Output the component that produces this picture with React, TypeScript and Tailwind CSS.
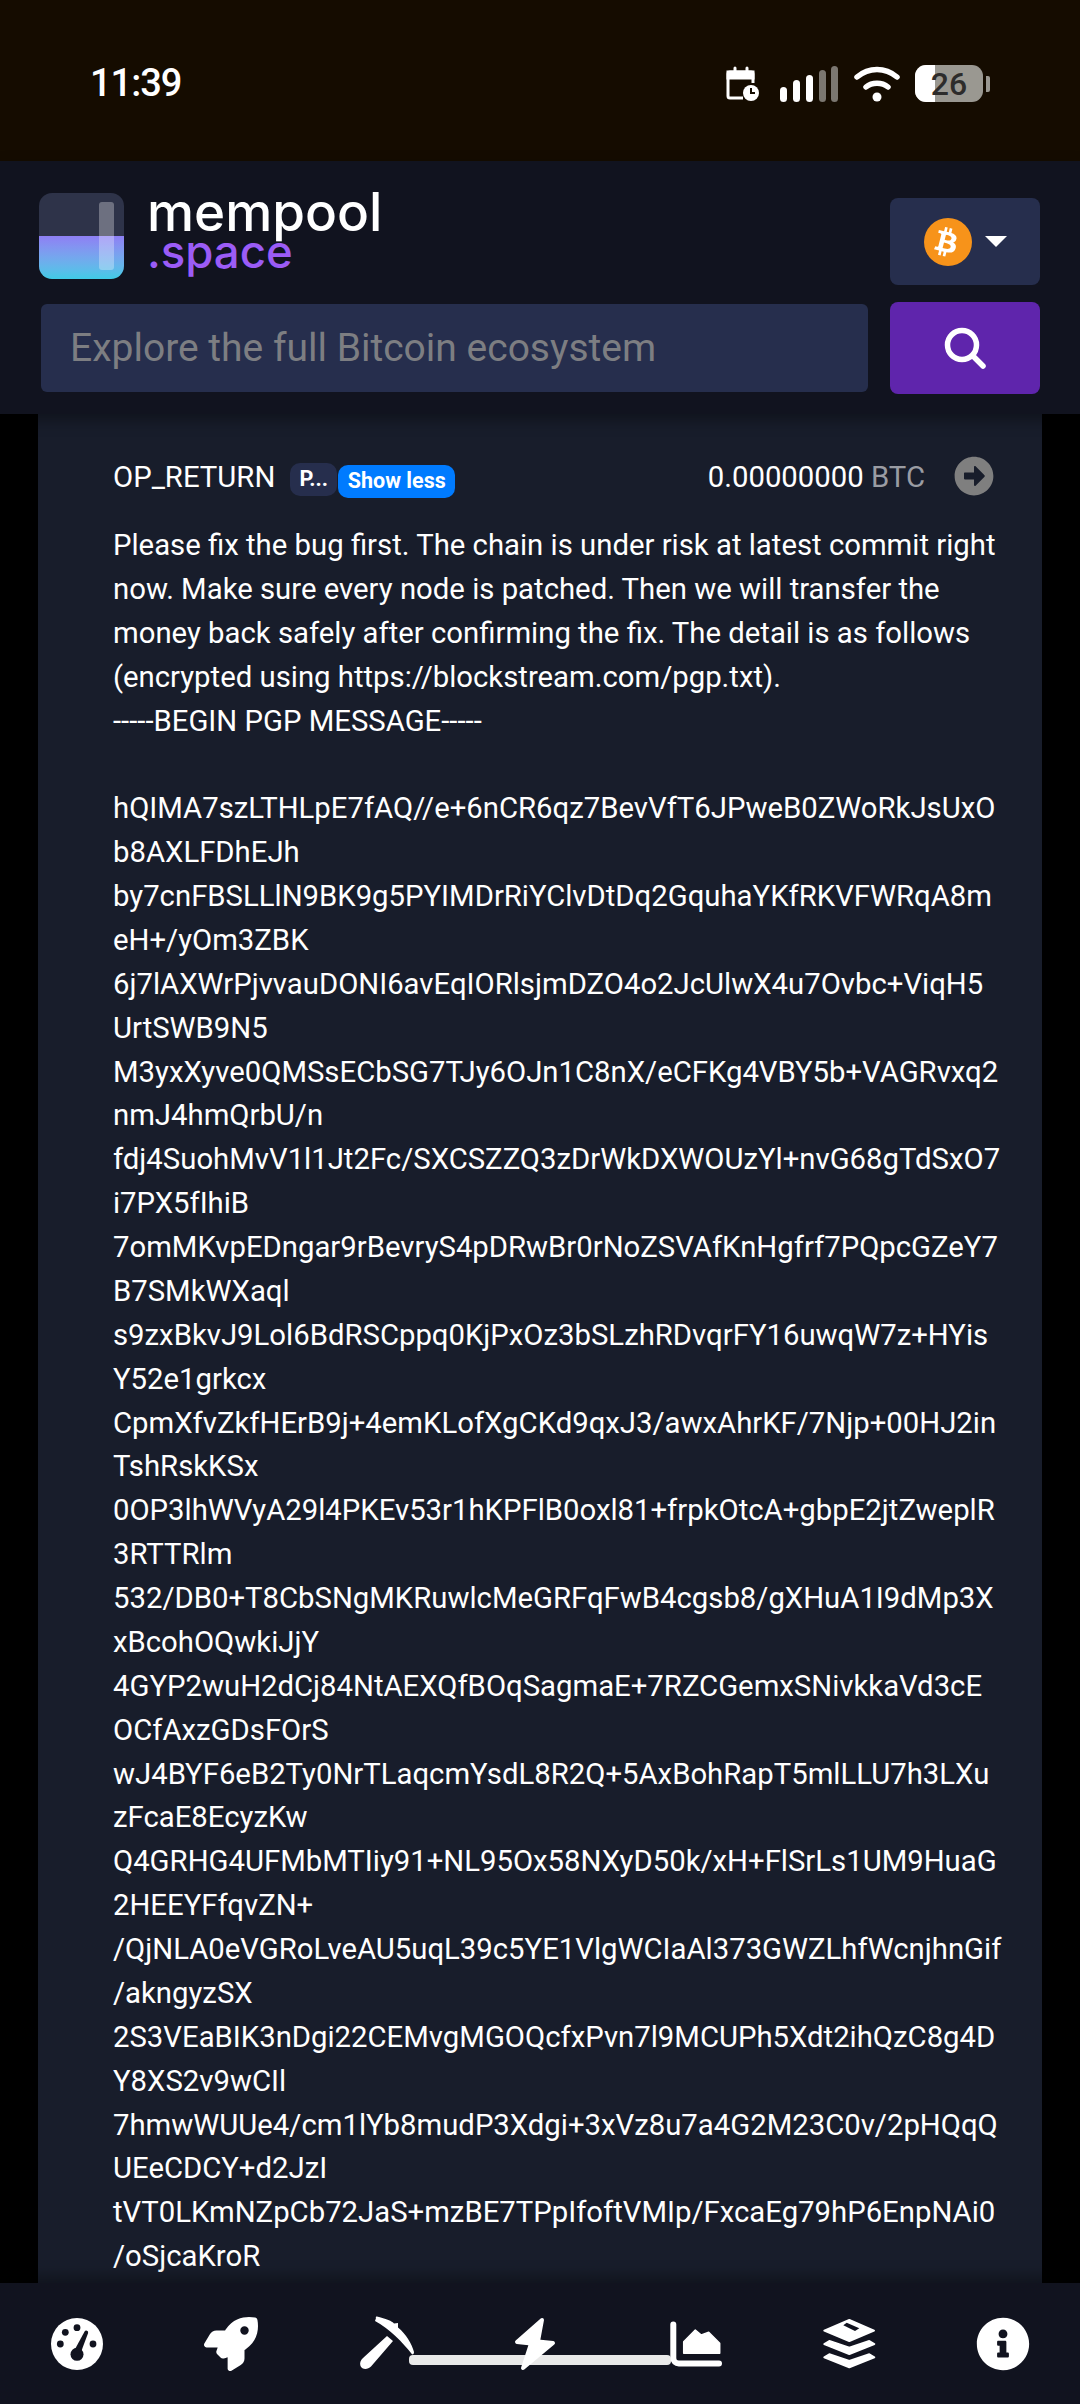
import React from 'react';
import { FaInfoCircle, FaArrowAltCircleRight } from 'react-icons/fa';
import { FaRocket } from 'react-icons/fa6';

const body = [
  'Please fix the bug first. The chain is under risk at latest commit right',
  'now. Make sure every node is patched. Then we will transfer the',
  'money back safely after confirming the fix. The detail is as follows',
  '(encrypted using https://blockstream.com/pgp.txt).',
  '-----BEGIN PGP MESSAGE-----',
  '\u00a0',
  'hQIMA7szLTHLpE7fAQ//e+6nCR6qz7BevVfT6JPweB0ZWoRkJsUxO',
  'b8AXLFDhEJh',
  'by7cnFBSLLlN9BK9g5PYIMDrRiYClvDtDq2GquhaYKfRKVFWRqA8m',
  'eH+/yOm3ZBK',
  '6j7lAXWrPjvvauDONI6avEqIORlsjmDZO4o2JcUlwX4u7Ovbc+ViqH5',
  'UrtSWB9N5',
  'M3yxXyve0QMSsECbSG7TJy6OJn1C8nX/eCFKg4VBY5b+VAGRvxq2',
  'nmJ4hmQrbU/n',
  'fdj4SuohMvV1l1Jt2Fc/SXCSZZQ3zDrWkDXWOUzYl+nvG68gTdSxO7',
  'i7PX5fIhiB',
  '7omMKvpEDngar9rBevryS4pDRwBr0rNoZSVAfKnHgfrf7PQpcGZeY7',
  'B7SMkWXaql',
  's9zxBkvJ9Lol6BdRSCppq0KjPxOz3bSLzhRDvqrFY16uwqW7z+HYis',
  'Y52e1grkcx',
  'CpmXfvZkfHErB9j+4emKLofXgCKd9qxJ3/awxAhrKF/7Njp+00HJ2in',
  'TshRskKSx',
  '0OP3lhWVyA29l4PKEv53r1hKPFlB0oxl81+frpkOtcA+gbpE2jtZweplR',
  '3RTTRlm',
  '532/DB0+T8CbSNgMKRuwlcMeGRFqFwB4cgsb8/gXHuA1I9dMp3X',
  'xBcohOQwkiJjY',
  '4GYP2wuH2dCj84NtAEXQfBOqSagmaE+7RZCGemxSNivkkaVd3cE',
  'OCfAxzGDsFOrS',
  'wJ4BYF6eB2Ty0NrTLaqcmYsdL8R2Q+5AxBohRapT5mlLLU7h3LXu',
  'zFcaE8EcyzKw',
  'Q4GRHG4UFMbMTIiy91+NL95Ox58NXyD50k/xH+FlSrLs1UM9HuaG',
  '2HEEYFfqvZN+',
  '/QjNLA0eVGRoLveAU5uqL39c5YE1VlgWCIaAl373GWZLhfWcnjhnGif',
  '/akngyzSX',
  '2S3VEaBIK3nDgi22CEMvgMGOQcfxPvn7l9MCUPh5Xdt2ihQzC8g4D',
  'Y8XS2v9wCIl',
  '7hmwWUUe4/cm1lYb8mudP3Xdgi+3xVz8u7a4G2M23C0v/2pHQqQ',
  'UEeCDCY+d2JzI',
  'tVT0LKmNZpCb72JaS+mzBE7TPpIfoftVMIp/FxcaEg79hP6EnpNAi0',
  '/oSjcaKroR',
];

const navBg = '#11131f';

function Logo() {
  return (
    <div className="relative w-[85px] h-[86px] rounded-[13px] overflow-hidden flex flex-col shrink-0">
      <div className="h-[43px] bg-[#2e3349]" />
      <div className="flex-1 bg-gradient-to-b from-[#8e7ff4] to-[#3ecbe6]" />
      <div className="absolute left-[60px] top-[9px] w-[15px] h-[68px] rounded-[3px] bg-white/30" />
    </div>
  );
}

function StatusIcons() {
  return (
    <div className="flex items-center">
      <svg width="34" height="36" viewBox="0 0 34 36" fill="none" stroke="#fff" strokeWidth="3">
        <path d="M27 17V8a2 2 0 0 0-2-2H4A2 2 0 0 0 2 8v22a2 2 0 0 0 2 2h13" />
        <path d="M9 2v6M21 2v6" strokeLinecap="round" />
        <path d="M2 6h25v6H2z" fill="#fff" />
        <circle cx="25" cy="27" r="8" fill="#fff" stroke="none" />
        <path d="M25 22v5h4" stroke="#150c00" strokeWidth="2" />
      </svg>
      <svg className="ml-[19px]" width="60" height="36" viewBox="0 0 60 36">
        <rect x="1" y="21" width="7" height="15" rx="3.5" fill="#fff" />
        <rect x="14" y="14" width="7" height="22" rx="3.5" fill="#fff" />
        <rect x="27" y="9" width="7" height="27" rx="3.5" fill="#fff" />
        <rect x="40" y="4" width="7" height="32" rx="3.5" fill="#7b7770" />
        <rect x="52" y="0" width="7" height="36" rx="3.5" fill="#7b7770" />
      </svg>
      <svg className="ml-[15px]" width="46" height="36" viewBox="0 0 46 36" fill="none" stroke="#fff" strokeWidth="5.5" strokeLinecap="round">
        <path d="M3 11C15 1 31 1 43 11" />
        <path d="M12 21C18 16 28 16 34 21" />
        <circle cx="23" cy="31" r="4.5" fill="#fff" stroke="none" />
      </svg>
      <div className="ml-[15px] relative w-[68px] h-[37px] rounded-[11px] overflow-hidden bg-[#9a9891] flex items-center justify-center">
        <div className="absolute left-0 top-0 bottom-0 w-[20px] bg-white" />
        <span className="relative font-['Roboto',sans-serif] font-medium text-[32px] leading-none text-[#2d2c2b]">26</span>
      </div>
      <div className="ml-[3px] w-[4px] h-[16px] rounded-r-[2px] bg-[#9a9891]" />
    </div>
  );
}

function GaugeIcon() {
  return (
    <svg className="relative" width="60" height="60" viewBox="0 0 60 60">
      <circle cx="30" cy="30" r="26" fill="#fff" />
      <g fill={navBg}>
        <circle cx="30" cy="13.7" r="3.4" />
        <circle cx="18.3" cy="18.3" r="3.4" />
        <circle cx="13.3" cy="30" r="3.4" />
        <circle cx="46" cy="30" r="3.4" />
        <circle cx="30" cy="40.3" r="6.5" />
        <path d="M27 37 37.6 17.6a1.9 1.9 0 0 1 3.5 1.4L33.5 39.5z" />
      </g>
    </svg>
  );
}

function PickIcon() {
  return (
    <svg className="relative" width="60" height="60" viewBox="0 0 60 60" fill="#fff">
      <path d="M20 4C19 2.500 21 2 23 3C30 5 36 7 38 9.500L42 9L42 13.500C50 20 56 30 58 38C58 41 56 41 55 39C47 29 34 15 19 7Z" />
      <path d="M31 22L37 27L15 52.500C11.500 56 6 55.500 4.500 52C3.500 49 4.500 46 7 44Z" />
    </svg>
  );
}

function BoltIcon() {
  return (
    <svg className="relative -translate-x-[3px]" width="60" height="60" viewBox="0 0 60 60" fill="#fff" stroke="#fff" strokeWidth="4" strokeLinejoin="round">
      <polygon points="35,6 10,28 24,29.500 16,54 46,29 31,27.500" />
    </svg>
  );
}

function ChartIcon() {
  return (
    <svg className="relative" width="64" height="60" viewBox="0 0 64 60" fill="none">
      <path d="M11.300 10.500V44a5.500 5.500 0 0 0 5.500 5.500H57" stroke="#fff" strokeWidth="6" strokeLinecap="round" />
      <polygon points="21.700,27.700 33.300,16 39.300,21 46.700,18.300 57.700,29.300 57.700,39.300 21.700,39.300" fill="#fff" stroke="#fff" strokeWidth="1.500" strokeLinejoin="round" />
    </svg>
  );
}

function LayersIcon() {
  return (
    <svg className="relative" width="60" height="60" viewBox="0 0 60 60" fill="#fff" stroke="#fff" strokeWidth="2" strokeLinejoin="round">
      <polygon points="30.300,6 55,16.700 30.300,27 5.300,16.700" />
      <polygon points="27.700,8.700 40.300,14.300 36,17 24.300,11.300" fill={navBg} stroke="none" />
      <polygon points="5.300,30 10.300,27 30.300,33.700 50.300,27 55.300,30 30.300,40" />
      <polygon points="5.300,43.300 10.300,40.300 30.300,47 50.300,40.300 55.300,43.300 30.300,53.300" />
    </svg>
  );
}

export default function App() {
  return (
    <div className="w-[1080px] h-[2404px] flex flex-col bg-black overflow-hidden font-['Roboto',sans-serif] text-white relative">
      {/* status bar */}
      <div className="h-[161px] shrink-0 bg-[#150c00] flex items-start justify-between pl-[90px] pr-[90px] pt-[61px]">
        <span className="font-medium text-[38px] leading-[44px] tracking-[-1px]">11:39</span>
        <div className="pt-[4px]"><StatusIcons /></div>
      </div>

      {/* header */}
      <div className="h-[253px] shrink-0 bg-[#11131f] pl-[39px] pr-[40px] relative z-10 shadow-[0_6px_14px_rgba(0,0,0,0.35)]">
        <div className="flex justify-between pt-[32px] h-[141px]">
          <div className="flex">
            <Logo />
            <div className="ml-[23px] flex flex-col font-['Inter',sans-serif] font-medium">
              <span className="text-[53px] leading-[38px]">mempool</span>
              <span className="mt-[2px] text-[45.500px] leading-[38px] text-[#9b5cf6]">.space</span>
            </div>
          </div>
          <div className="w-[150px] h-[87px] mt-[5px] rounded-[8px] bg-[#262e4d] flex items-center pl-[34px]">
            <svg width="48" height="48" viewBox="0 0 48 48">
              <circle cx="24" cy="24" r="24" fill="#f7931a" />
              <path d="M32.5 20.8c.5-3.100-1.900-4.800-5.100-5.900l1-4.200-2.600-.6-1 4.100-2.100-.5 1-4.100-2.600-.6-1 4.200-5.200-1.300-.7 2.800 1.900.5c1 .2 1.200.9 1.200 1.400l-2.900 11.500c-.1.300-.5.800-1.200.6l-1.900-.5-1.300 3 5.100 1.300-1.100 4.300 2.600.6 1-4.200 2.100.5-1 4.200 2.600.6 1.100-4.300c4.400.8 7.700.5 9.100-3.500 1.100-3.200-.1-5-2.400-6.200 1.700-.4 3-1.500 3.300-3.800zm-5.900 8.300c-.8 3.200-6.200 1.500-8 1l1.400-5.700c1.800.5 7.400 1.300 6.600 4.700zm.8-8.300c-.7 2.900-5.200 1.400-6.700 1l1.300-5.100c1.500.4 6.200 1.100 5.400 4.100z" fill="#fff" />
            </svg>
            <div className="ml-[13px] w-0 h-0 border-l-[11px] border-r-[11px] border-t-[11px] border-l-transparent border-r-transparent border-t-white" />
          </div>
        </div>
        <div className="flex justify-between items-center h-[92px]">
          <div className="w-[827px] ml-[2px] h-[88px] rounded-[6px] bg-[#262e4d] pl-[29px] flex items-center text-[39px] text-[#7d7e82]">Explore the full Bitcoin ecosystem</div>
          <div className="w-[150px] h-[92px] rounded-[8px] bg-[#5f25ac] flex items-center justify-center">
            <svg width="44" height="44" viewBox="0 0 44 44" fill="none" stroke="#fff" strokeWidth="5.5" strokeLinecap="round">
              <circle cx="19" cy="19" r="14.500" />
              <path d="M30 30 40 40" />
            </svg>
          </div>
        </div>
      </div>

      {/* card */}
      <div className="flex-1 min-h-0 mx-[38px] bg-[#181d2b] pl-[75px] pr-[48px] overflow-hidden relative">
        <div className="flex items-center h-[44px] mt-[42px]">
          <span className="text-[29.3px]">OP_RETURN</span>
          <span className="ml-[15px] mt-[3px] w-[47px] h-[33px] rounded-[10px] bg-[#262e4d] text-[21.5px] font-bold flex items-center justify-center">P...</span>
          <span className="ml-[1px] mt-[7px] w-[117px] h-[33px] rounded-[10px] bg-[#007bff] text-[21.5px] font-bold flex items-center justify-center">Show less</span>
          <span className="ml-auto text-[29.3px]">0.00000000 <span className="text-[#9a9ca3]">BTC</span></span>
          <FaArrowAltCircleRight className="ml-[29px] -mt-[5px] text-[40px] text-[#7f7f7f]" />
        </div>
        <div className="mt-[24px] text-[29.3px] leading-[43.875px] whitespace-nowrap">
          {body.map((line, i) => (
            <div key={i}>{line}</div>
          ))}
        </div>
      </div>

      {/* footer nav */}
      <div className="h-[121px] shrink-0 bg-[#11131f] relative z-10 grid grid-cols-7 items-center justify-items-center shadow-[0_-6px_14px_rgba(0,0,0,0.35)]">
        <div className="absolute left-[409px] top-[72px] w-[262px] h-[10px] rounded-[4px] bg-[#e9e9e9]" />
        <GaugeIcon />
        <FaRocket className="relative text-[54px]" />
        <PickIcon />
        <BoltIcon />
        <ChartIcon />
        <LayersIcon />
        <FaInfoCircle className="relative text-[54px]" />
      </div>
    </div>
  );
}
